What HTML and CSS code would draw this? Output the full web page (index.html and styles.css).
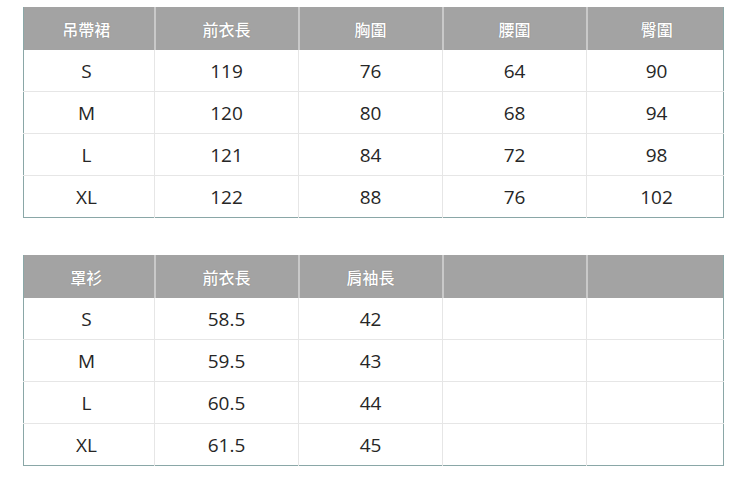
FILE: index.html
```html
<!DOCTYPE html>
<html lang="zh-Hant">
<head>
<meta charset="utf-8">
<link rel="stylesheet" href="styles.css">
</head>
<body>
<div class="page">
  <table class="size-table">
    <colgroup><col class="c1"><col class="c2"><col class="c3"><col class="c4"><col class="c5"></colgroup>
    <thead><tr><th>吊帶裙</th><th>前衣長</th><th>胸圍</th><th>腰圍</th><th>臀圍</th></tr></thead>
    <tbody>
      <tr><td>S</td><td>119</td><td>76</td><td>64</td><td>90</td></tr>
      <tr><td>M</td><td>120</td><td>80</td><td>68</td><td>94</td></tr>
      <tr><td>L</td><td>121</td><td>84</td><td>72</td><td>98</td></tr>
      <tr><td>XL</td><td>122</td><td>88</td><td>76</td><td>102</td></tr>
    </tbody>
  </table>
  <table class="size-table">
    <colgroup><col class="c1"><col class="c2"><col class="c3"><col class="c4"><col class="c5"></colgroup>
    <thead><tr><th>罩衫</th><th>前衣長</th><th>肩袖長</th><th></th><th></th></tr></thead>
    <tbody>
      <tr><td>S</td><td>58.5</td><td>42</td><td></td><td></td></tr>
      <tr><td>M</td><td>59.5</td><td>43</td><td></td><td></td></tr>
      <tr><td>L</td><td>60.5</td><td>44</td><td></td><td></td></tr>
      <tr><td>XL</td><td>61.5</td><td>45</td><td></td><td></td></tr>
    </tbody>
  </table>
</div>
</body>
</html>
```
FILE: styles.css
```css
html, body { margin: 0; padding: 0; background: #fff; }
.page {
  padding: 7px 0 0 23px;
  display: flex;
  flex-direction: column;
  gap: 37px;
}
.size-table {
  width: 700px;
  table-layout: fixed;
  border-collapse: collapse;
  font-family: "Open Sans", "Noto Sans CJK TC", sans-serif;
  border-left: 1px solid #8aa7a7;
  border-right: 1px solid #8aa7a7;
  border-bottom: 1px solid #8aa7a7;
}
.c1 { width: 131px; }
.c2 { width: 144px; }
.c3 { width: 144px; }
.c4 { width: 144px; }
.c5 { width: 137px; }
.size-table th {
  height: 43px;
  padding: 0;
  background: #a3a3a3;
  color: #fff;
  font-family: "Noto Sans CJK TC", sans-serif;
  font-weight: 500;
  font-size: 16px;
  text-shadow: 0 0 1px rgba(90,90,90,0.6);
  border-left: 2px solid #c9c9c9;
}
.size-table th:first-child { border-left: none; padding-right: 5px; }
.size-table th:last-child { padding-left: 3px; }
.size-table td {
  height: 41px;
  padding: 0;
  text-align: center;
  color: #262626;
  font-size: 19px;
  border-left: 1px solid #e6e6e6;
  border-top: 1px solid #e6e6e6;
}
.size-table tbody tr:first-child td { border-top: none; }
.size-table td:first-child { border-left: none; padding-right: 5px; }
.size-table td:last-child { padding-left: 3px; }
```
